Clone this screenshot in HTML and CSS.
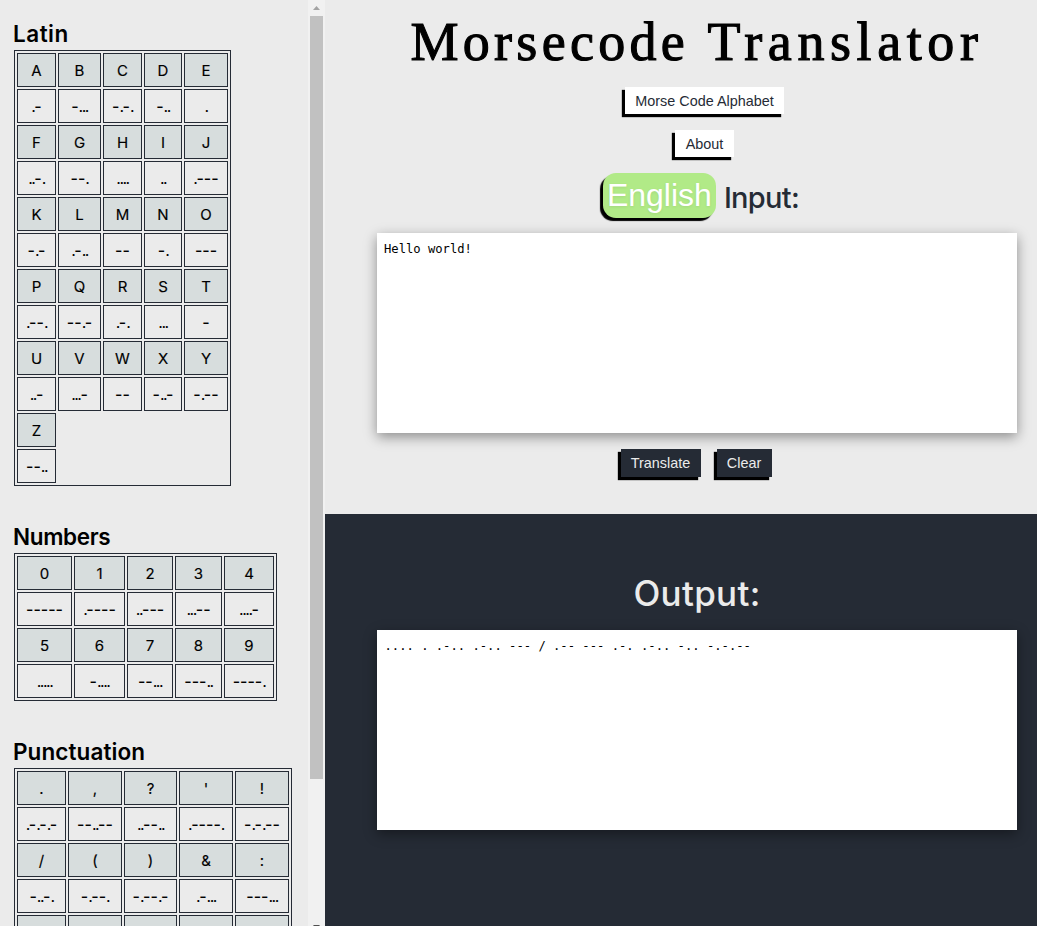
FILE: index.html
```html
<!DOCTYPE html>
<html lang="en">
<head>
<meta charset="utf-8">
<title>Morsecode Translator</title>
<link rel="stylesheet" href="styles.css">
</head>
<body>
<div class="app">
  <aside class="sidebar">
    <div class="alphabet">
      <section class="group"><h2 class="latin-title">Latin</h2><table id="latin"></table></section>
      <section class="group"><h2 class="numbers-title">Numbers</h2><table id="numbers"></table></section>
      <section class="group"><h2 class="punctuation-title">Punctuation</h2><table id="punctuation"></table></section>
    </div>
    <div class="scrollbar">
      <svg class="arrow" width="17" height="16" viewBox="0 0 17 16"><path d="M5 10h7L8.500 6z" fill="#a3a3a3"/></svg>
      <div class="thumb"></div>
      <svg class="arrow-down" width="17" height="4" viewBox="0 0 17 4"><path d="M5 0h7L8.500 4z" fill="#505050"/></svg>
    </div>
  </aside>
  <main class="main">
    <section class="input-panel">
      <h1><span class="word-first">Morsecode</span> <span class="word-second">Translator</span></h1>
      <button class="btn light alphabet-btn">Morse Code Alphabet</button>
      <button class="btn light about-btn">About</button>
      <div class="input-heading"><button class="language">English</button><span class="input-label">Input:</span></div>
      <div class="box">Hello world!</div>
      <div class="actions"><button class="btn dark translate-btn">Translate</button><button class="btn dark clear-btn">Clear</button></div>
    </section>
    <section class="output-panel">
      <h2 class="output-label"><span>Output:</span></h2>
      <div class="box">.... . .-.. .-.. --- / .-- --- .-. .-.. -.. -.-.--</div>
    </section>
  </main>
</div>
<script src="script.js"></script>
</body>
</html>
```
FILE: styles.css
```css
* { box-sizing: border-box; }
body { margin: 0; background: #ebebeb; font-family: Inter, "Noto Sans", sans-serif; color: #000; }
.app { display: flex; width: 1037px; height: 926px; overflow: hidden; }
.sidebar { display: flex; width: 325px; height: 926px; overflow: hidden; }
.alphabet { width: 308px; height: 926px; padding: 17px 0 0 14px; overflow: hidden; }
.group { margin-bottom: 34px; }
.group h2 { margin: 0 0 0 -1px; height: 33px; font-size: 22.5px; line-height: 33px; font-weight: 600; white-space: nowrap; }
.latin-title { letter-spacing: 0.5px; }
.numbers-title { letter-spacing: -0.35px; }
.punctuation-title { letter-spacing: 0.1px; }
table { table-layout: fixed; border: 1px solid #252b35; border-spacing: 2px; }
td { height: 34px; padding: 0; border: 1px solid #252b35; text-align: center; font-size: 16px; line-height: 32px; white-space: nowrap; }
td.letter { background: #d7dddd; padding-top: 1px; font-size: 15px; line-height: 31px; font-weight: 400; -webkit-text-stroke: 0.15px #000; }
td.code { line-height: 32px; font-weight: 500; }
.dots { font-weight: 400; letter-spacing: -1.5px; }
.scrollbar { display: flex; flex-direction: column; align-items: center; width: 17px; height: 926px; background: #f1f1f1; }
.arrow { flex: none; }
.thumb { flex: none; width: 13px; height: 763px; background: #c1c1c1; }
.arrow-down { flex: none; margin-top: 146px; }
.main { width: 712px; }
.input-panel { display: flex; flex-direction: column; align-items: center; height: 514px; padding: 0 20px 0 52px; background: #ebebeb; }
h1 { margin: 0; height: 87px; font-family: "Liberation Serif", serif; font-size: 54px; line-height: 84px; font-weight: 400; letter-spacing: 5px; white-space: nowrap; -webkit-text-stroke: 1.1px #000; }
.word-first { letter-spacing: 4.3px; }
.word-second { letter-spacing: 5.6px; }
.btn { display: block; border: 0; padding: 0; font-family: "Liberation Sans", Arial, sans-serif; font-size: 14.4px; box-shadow: -3px 3px 1px #000; white-space: nowrap; }
.light { height: 27px; padding-top: 1px; line-height: 27px; background: #fff; color: #252b35; }
.alphabet-btn { width: 159px; margin: 0 0 16px 15px; }
.about-btn { width: 59px; margin: 0 0 16px 15px; }
.input-heading { display: flex; align-items: center; gap: 8px; height: 45px; margin: 0 0 15px 8px; }
.language { width: 113px; height: 45px; padding: 0; border: 0; border-radius: 13px; background: #b1ea87; color: #fff; font: 32px/45px "Liberation Sans", Arial, sans-serif; box-shadow: -3px 3px 1px #000; text-shadow: 0 1px 3px rgba(0,0,0,.08); white-space: nowrap; }
.input-label { color: #252b35; font-size: 29px; line-height: 49px; font-weight: 500; letter-spacing: -0.7px; padding-top: 4px; }
.box { width: 640px; height: 200px; padding: 8px 7px; background: #fff; box-shadow: 0 4px 12px rgba(0,0,0,.4); font: 12.180px/16px "DejaVu Sans Mono", monospace; white-space: pre; }
.output-panel .box { padding-left: 7.5px; }
.actions { display: flex; gap: 16px; margin: 16px 2px 0 0; }
.dark { height: 28px; line-height: 28px; background: #252b35; color: #ebebeb; }
.translate-btn { width: 80px; }
.clear-btn { width: 55px; }
.output-panel { display: flex; flex-direction: column; align-items: center; height: 412px; padding: 50px 20px 0 52px; background: #252b35; }
.output-label { margin: 0; height: 66px; color: #ebebeb; font-size: 35px; line-height: 59px; font-weight: 500; letter-spacing: 0.3px; }
```
FILE: script.js
```js
const tables = {
  latin: {
    widths: [39, 43, 39, 38, 44],
    rows: [
      ["A .-", "B -...", "C -.-.", "D -..", "E ."],
      ["F ..-.", "G --.", "H ....", "I ..", "J .---"],
      ["K -.-", "L .-..", "M --", "N -.", "O ---"],
      ["P .--.", "Q --.-", "R .-.", "S ...", "T -"],
      ["U ..-", "V ...-", "W --", "X -..-", "Y -.--"],
      ["Z --.."]
    ]
  },
  numbers: {
    widths: [55, 51, 46, 47, 50],
    rows: [
      ["0 -----", "1 .----", "2 ..---", "3 ...--", "4 ....-"],
      ["5 .....", "6 -....", "7 --...", "8 ---..", "9 ----."]
    ]
  },
  punctuation: {
    widths: [49, 54, 53, 54, 54],
    rows: [
      [". .-.-.-", ", --..--", "? ..--..", "' .----.", "! -.-.--"],
      ["/ -..-.", "( -.--.", ") -.--.-", "& .-...", ": ---..."],
      [" ", " ", " ", " ", " "]
    ]
  }
};

for (const [id, { widths, rows }] of Object.entries(tables)) {
  const table = document.getElementById(id);
  table.style.width = widths.reduce((sum, w) => sum + w, 14) + "px";
  const cols = document.createElement("colgroup");
  for (const w of widths) {
    const col = document.createElement("col");
    col.style.width = w + "px";
    cols.append(col);
  }
  table.append(cols);
  const body = table.createTBody();
  for (const row of rows) {
    const letters = body.insertRow();
    const codes = body.insertRow();
    for (const entry of row) {
      const [letter, code] = entry.split(" ");
      const letterCell = letters.insertCell();
      letterCell.className = "letter";
      letterCell.textContent = letter;
      const codeCell = codes.insertCell();
      codeCell.className = "code";
      // Runs of dots are set tighter than dashes.
      codeCell.innerHTML = code.replace(/\.+/g, '<span class="dots">$&</span>');
    }
  }
}
```
